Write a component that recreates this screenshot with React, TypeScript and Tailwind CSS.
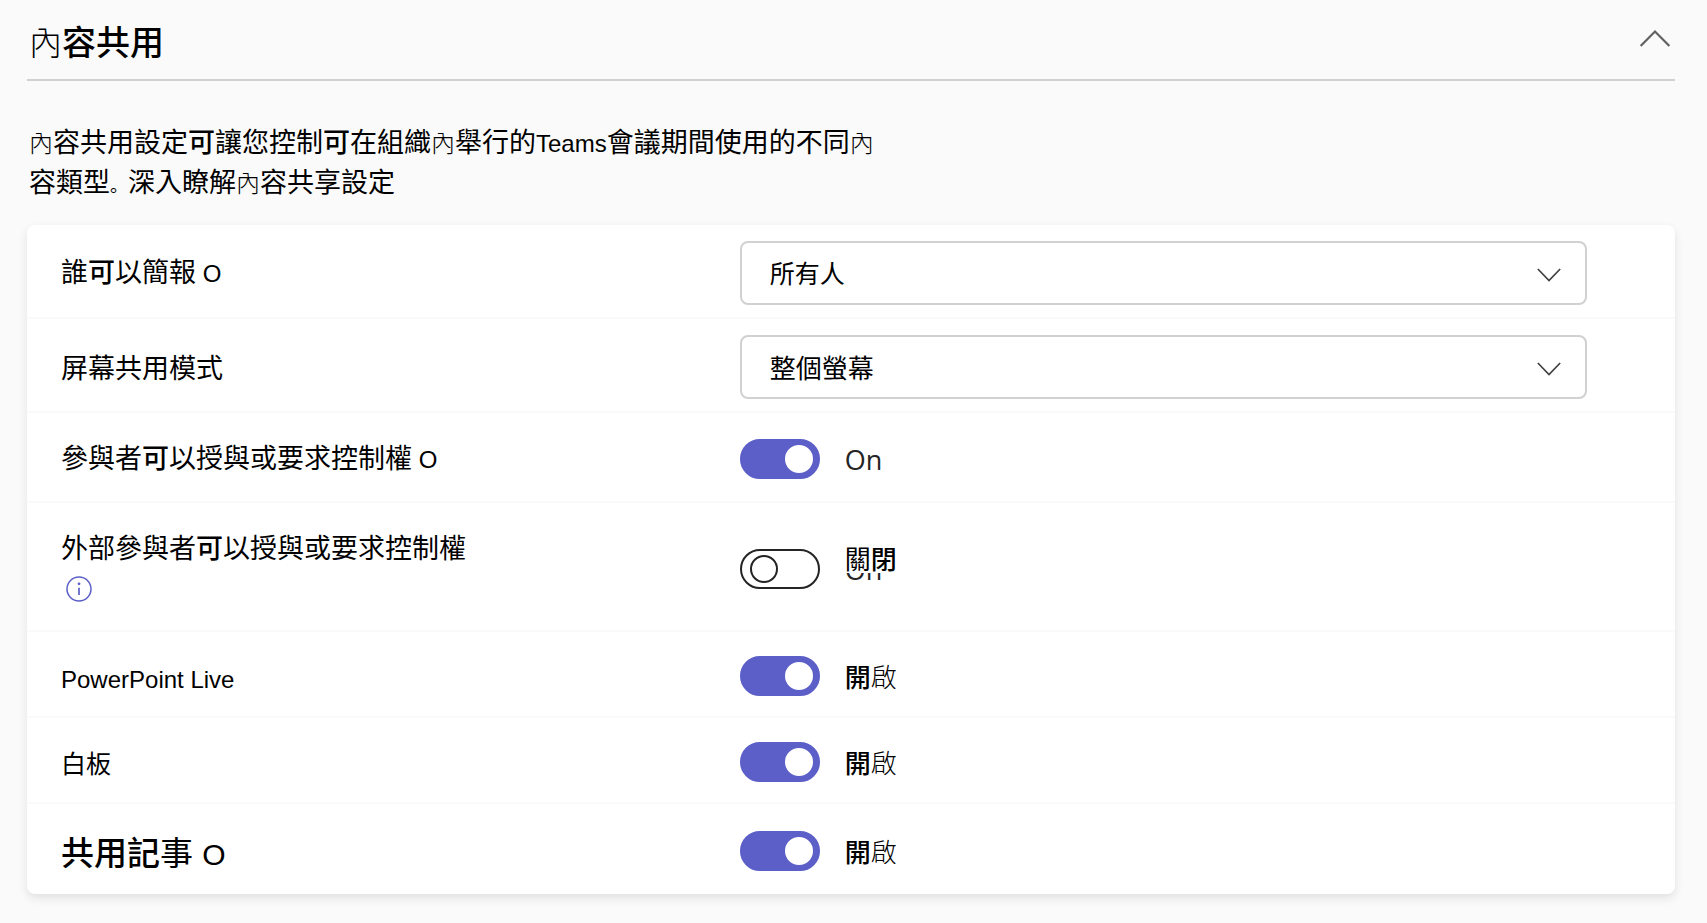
import { useState } from 'react'
import clsx from 'clsx'

const FONT = "font-['Liberation_Sans','Noto_Sans_CJK_TC',sans-serif]"

function Chevron({ className, up }: { className: string; up?: boolean }) {
  return (
    <svg viewBox="0 0 28 16" fill="none" stroke="currentColor" strokeWidth="2" className={className} aria-hidden="true">
      <path d={up ? 'M0.5 15 14 1.5 27.5 15' : 'M1 1 14 14.5 27 1'} />
    </svg>
  )
}

function InfoIcon() {
  return (
    <svg viewBox="0 0 26 26" fill="none" className="w-[26px] h-[26px] text-[#5b5fc7]" aria-hidden="true">
      <circle cx="13" cy="13" r="12" stroke="currentColor" strokeWidth="1.5" />
      <circle cx="13" cy="7.8" r="1.4" fill="currentColor" />
      <path d="M13 11.8v7.2" stroke="currentColor" strokeWidth="1.7" />
    </svg>
  )
}

function Row({ id, label, className, labelClass = 'text-[27px]', info, children }: {
  id: string
  label: React.ReactNode
  className: string
  labelClass?: string
  info?: boolean
  children: React.ReactNode
}) {
  return (
    <div className={clsx('flex items-center pt-1', className)}>
      <div className="w-[43%] shrink-0 pl-[34px]">
        <label htmlFor={id} className={clsx('block leading-10', labelClass)}>
          {label}
        </label>
        {info && (
          <button type="button" aria-label="詳細資訊" className="flex h-10 items-center pl-[5px]">
            <InfoIcon />
          </button>
        )}
      </div>
      <div className="flex flex-1 items-center pl-1 pr-[88px]">{children}</div>
    </div>
  )
}

function Select({ id, options, textClass }: { id: string; options: string[]; textClass: string }) {
  return (
    <div className="relative flex-1">
      <select
        id={id}
        className={clsx(
          'block w-full h-16 appearance-none rounded-lg border-2 border-[#d1d1d1] bg-white pt-1 pl-7 pr-16 text-black',
          textClass,
        )}
      >
        {options.map((o) => (
          <option key={o}>{o}</option>
        ))}
      </select>
      <Chevron className="absolute right-[26px] top-[27px] w-6 h-[14px] text-[#424242] pointer-events-none" />
    </div>
  )
}

function Switch({ id, initial, children }: { id: string; initial: boolean; children: React.ReactNode }) {
  const [on, setOn] = useState(initial)
  return (
    <div className="flex items-center gap-[25px]">
      <input
        id={id}
        type="checkbox"
        role="switch"
        checked={on}
        onChange={(e) => setOn(e.target.checked)}
        className="flex w-20 h-10 shrink-0 appearance-none items-center rounded-full border-2 border-[#242424] bg-white px-2 before:block before:w-7 before:h-7 before:rounded-full before:border-2 before:border-[#242424] before:bg-white checked:justify-end checked:border-[#5b5fc7] checked:bg-[#5b5fc7] checked:pr-[5px] checked:before:border-white"
      />
      <span className="relative pt-1 text-[26px] leading-9">{children}</span>
    </div>
  )
}

function Light({ children }: { children: string }) {
  return <span className="font-light">{children}</span>
}

function Strong({ children }: { children: string }) {
  return <span className="font-medium">{children}</span>
}

// 內 sits a touch narrower than its neighbours in body text
function Nei() {
  return <span className="text-[24px] leading-none font-light">內</span>
}

function OnText() {
  return <span className="font-['Open_Sans',sans-serif] text-[27px] leading-none text-[#242424]">On</span>
}

function Open() {
  return <><Strong>開</Strong><Light>啟</Light></>
}

function O() {
  return <span className="text-[24px] leading-none"> O</span>
}

export default function App() {
  return (
    <main lang="zh-Hant" className={`min-h-screen bg-[#fafafa] pl-[27px] pr-8 pb-7 text-black ${FONT}`}>
      <header className="flex h-[81px] items-center justify-between border-b-2 border-[#d1d1d1] pr-[5px]">
        <h1 className="pt-[6px] pl-[2px] text-[34px] leading-10 font-medium">
          <span className="text-[33px] leading-none font-light">內</span>容共用
        </h1>
        <button type="button" aria-label="收合" aria-expanded="true" className="pb-[2px] text-[#616161]">
          <Chevron up className="w-[30px] h-[17px]" />
        </button>
      </header>

      <p className="mt-[42px] pl-[2px] text-[27px] leading-10">
        <Nei />容共用設定<Strong>可</Strong>讓您控制<Strong>可</Strong>在組織<Nei />舉行的<span className="text-[24px] leading-none">Teams</span>會議期間使用的不同<Nei />
        <br />
        容類型<span className="font-['Noto_Sans_CJK_SC',sans-serif] text-[18px] leading-none" lang="zh-Hans">。</span>深入瞭解<Nei />容共享設定
      </p>

      <section className="mt-[22px] rounded-lg bg-white shadow-[0_4px_10px_rgba(0,0,0,0.1)] divide-y-2 divide-[#fafafa]">
        <Row id="presenter" className="h-[94px]" label={<>誰<Strong>可</Strong>以簡報<O /></>}>
          <Select id="presenter" options={['所有人']} textClass="text-[25px]" />
        </Row>
        <Row id="screen" className="h-[94px]" labelClass="text-[27px] pt-1" label="屏幕共用模式">
          <Select id="screen" options={['整個螢幕']} textClass="text-[26px]" />
        </Row>
        <Row id="control" className="h-[90px]" label={<>參與者<Strong>可</Strong>以授與或要求控制權<O /></>}>
          <Switch id="control" initial><OnText /></Switch>
        </Row>
        <Row id="external" className="h-[129px]" label={<>外部參與者<Strong>可</Strong>以授與或要求控制權</>} info>
          <Switch id="external" initial={false}>
            <OnText />
            <span className="absolute left-0 bottom-4 bg-white leading-[26px] whitespace-nowrap">
              關<Strong>閉</Strong>
            </span>
          </Switch>
        </Row>
        <Row id="ppt" className="h-[86px]" labelClass="text-[24px] pt-2" label="PowerPoint Live">
          <Switch id="ppt" initial><Open /></Switch>
        </Row>
        <Row id="whiteboard" className="h-[86px]" labelClass="text-[25px] pt-1" label="白板">
          <Switch id="whiteboard" initial><Open /></Switch>
        </Row>
        <Row
          id="notes"
          className="h-[90px]"
          labelClass="text-[33px] pt-[6px]"
          label={<><Strong>共用記</Strong>事 <span className="text-[30px] leading-none">O</span></>}
        >
          <Switch id="notes" initial><Open /></Switch>
        </Row>
      </section>
    </main>
  )
}
